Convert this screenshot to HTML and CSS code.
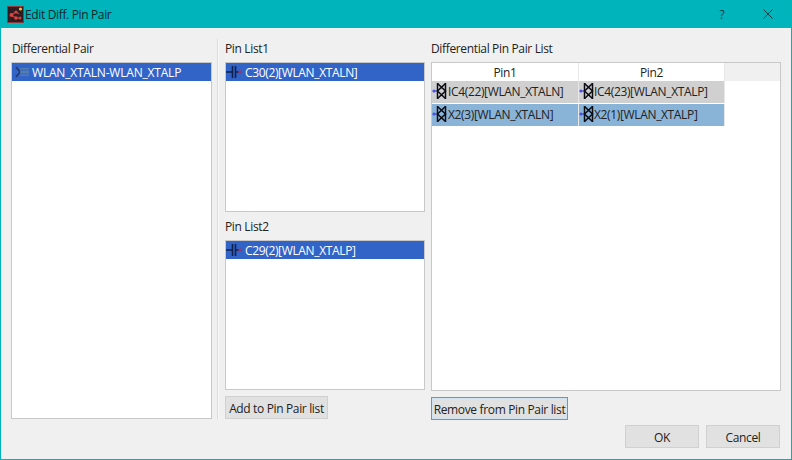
FILE: index.html
```html
<!DOCTYPE html>
<html lang="en">
<head>
<meta charset="utf-8">
<title>Edit Diff. Pin Pair</title>
<link rel="stylesheet" href="styles.css">
</head>
<body>
<div class="window">
  <header class="titlebar">
    <svg class="app-icon" width="17" height="17" viewBox="0 0 17 17">
      <rect x="0.5" y="0.5" width="16" height="16" fill="#2e1c22" stroke="#8a3a3a"/>
      <path d="M4 9 L9 6 L12 8 M4 9 L9 12 L13 12" stroke="#c8403a" stroke-width="1.2" fill="none"/>
      <circle cx="4.5" cy="9" r="2" fill="#d8483e"/>
      <circle cx="9" cy="6" r="1.6" fill="#d8483e"/>
      <circle cx="9" cy="12" r="1.8" fill="#d8483e"/>
      <circle cx="13" cy="12" r="1.5" fill="#c8403a"/>
      <circle cx="13.5" cy="3" r="1.6" fill="#f0c040"/>
    </svg>
    <span class="title">Edit Diff. Pin Pair</span>
    <span class="help">?</span>
    <svg class="close" width="10" height="10" viewBox="0 0 10 10"><path d="M0.5 0.5 L9.5 9.5 M9.5 0.5 L0.5 9.5" stroke="#1c3c40" stroke-width="1" fill="none"/></svg>
  </header>
  <main class="content">
    <div class="columns">
      <section class="col col-left">
        <h2 class="label label-left">Differential Pair</h2>
        <div class="list list-fill">
          <div class="list-row">
            <svg class="net-icon" width="16" height="14" viewBox="0 0 16 14">
              <path d="M2 2 L6 7 L2 12" stroke="#26366e" stroke-width="1.6" fill="none"/>
              <rect x="6" y="3" width="9" height="8" fill="#5f86a8" opacity="0.7"/>
              <path d="M6 5 H15 M6 9 H15" stroke="#3060c8" stroke-width="1"/>
            </svg>
            <span class="row-text">WLAN_XTALN-WLAN_XTALP</span>
          </div>
        </div>
      </section>
      <div class="divider"></div>
      <section class="col col-mid">
        <h2 class="label">Pin List1</h2>
        <div class="list list-half">
          <div class="list-row row-pin">
            <svg class="cap-icon" width="16" height="14" viewBox="0 0 16 14">
              <path d="M0 7 H6 M10 7 H13" stroke="#10204a" stroke-width="1.3"/>
              <path d="M6.5 1 V13 M9.5 1 V13" stroke="#10204a" stroke-width="1.6"/>
              <circle cx="14" cy="7" r="1.8" fill="#8a3a78"/>
            </svg>
            <span>C30(2)[WLAN_XTALN]</span>
          </div>
        </div>
        <h2 class="label label-second">Pin List2</h2>
        <div class="list list-half">
          <div class="list-row row-pin">
            <svg class="cap-icon" width="16" height="14" viewBox="0 0 16 14">
              <path d="M0 7 H6 M10 7 H13" stroke="#10204a" stroke-width="1.3"/>
              <path d="M6.5 1 V13 M9.5 1 V13" stroke="#10204a" stroke-width="1.6"/>
              <circle cx="14" cy="7" r="1.8" fill="#8a3a78"/>
            </svg>
            <span>C29(2)[WLAN_XTALP]</span>
          </div>
        </div>
        <button class="btn btn-add" type="button">Add to Pin Pair list</button>
      </section>
      <section class="col col-right">
        <h2 class="label">Differential Pin Pair List</h2>
        <div class="table">
          <div class="thead">
            <div class="th th-1">Pin1</div>
            <div class="th th-2">Pin2</div>
          </div>
          <div class="tr tr-gray">
            <div class="td td-1"><svg class="pin-icon" width="16" height="18" viewBox="0 0 16 18"><use href="#pin"/></svg><span>IC4(22)[WLAN_XTALN]</span></div>
            <div class="td td-2"><svg class="pin-icon" width="16" height="18" viewBox="0 0 16 18"><use href="#pin"/></svg><span>IC4(23)[WLAN_XTALP]</span></div>
          </div>
          <div class="tr tr-blue">
            <div class="td td-1"><svg class="pin-icon" width="16" height="18" viewBox="0 0 16 18"><use href="#pin"/></svg><span>X2(3)[WLAN_XTALN]</span></div>
            <div class="td td-2"><svg class="pin-icon" width="16" height="18" viewBox="0 0 16 18"><use href="#pin"/></svg><span>X2(1)[WLAN_XTALP]</span></div>
          </div>
        </div>
        <button class="btn btn-remove" type="button">Remove from Pin Pair list</button>
      </section>
    </div>
    <footer class="footer">
      <button class="btn btn-foot" type="button">OK</button>
      <button class="btn btn-foot" type="button">Cancel</button>
    </footer>
  </main>
</div>
<svg class="defs" width="0" height="0">
  <defs>
    <g id="pin">
      <path d="M2 9 H6" stroke="#3a4ad0" stroke-width="1"/>
      <circle cx="2" cy="9" r="1.6" fill="#4a50e0"/>
      <path d="M5.5 1.5 L13.5 9 L5.5 16.5 M13.5 1.5 L5.5 9 L13.5 16.5" stroke="#0c0c14" stroke-width="1.6" fill="none"/>
      <path d="M5.5 1 V17 M13.5 1 V17" stroke="#0c0c14" stroke-width="1.5" fill="none"/>
    </g>
  </defs>
</svg>
</body>
</html>
```
FILE: styles.css
```css
* { box-sizing: border-box; }
html, body { margin: 0; padding: 0; }
body {
  width: 792px;
  height: 460px;
  overflow: hidden;
  font-family: "Open Sans", "Noto Sans", sans-serif;
  font-size: 12px;
  letter-spacing: -0.35px;
  color: #222;
}
.window {
  width: 792px;
  height: 460px;
  display: flex;
  flex-direction: column;
  background: #f0f0f0;
  border: 1px solid #00b4bc;
  border-top: 0;
}
.titlebar {
  height: 28px;
  flex: none;
  display: flex;
  align-items: center;
  background: #00b4bc;
  padding-left: 7px;
  margin: 0 -1px;
}
.app-icon { flex: none; margin-right: 1px; }
.title { color: #10282c; flex: 1; }
.help { width: 12px; margin-right: 35px; text-align: center; color: #1c3c40; }
.close { margin-right: 19px; }
.content {
  flex: 1;
  display: flex;
  flex-direction: column;
  padding: 11px 10px 11px 10px;
  min-height: 0;
}
.columns { display: flex; height: 380px; flex: none; }
.col { display: flex; flex-direction: column; }
.col-left { width: 201px; }
.col-mid { width: 200px; }
.col-right { width: 350px; margin-left: 6px; }
.divider {
  width: 2px;
  margin: 0 6px 0 5px;
  background: #dcdcdc;
  border-right: 1px solid #f8f8f8;
}
.label {
  margin: 0;
  height: 23px;
  flex: none;
  padding-top: 1px;
  font-size: inherit;
  font-weight: 400;
  line-height: 18px;
}
.label-left { padding-left: 1px; }
.label-second { margin-top: 5px; }
.list {
  background: #fff;
  border: 1px solid #c8c8c8;
  overflow: hidden;
}
.list-fill { flex: 1; }
.list-half { height: 150px; flex: none; }
.list-row {
  height: 18px;
  display: flex;
  align-items: center;
  background: #3264c8;
  color: #fff;
  padding-left: 2px;
  white-space: nowrap;
}
.row-text { letter-spacing: -0.2px; }
.net-icon { margin-right: 2px; flex: none; }
.row-pin { padding-left: 0; }
.cap-icon { margin-right: 3px; flex: none; }
.btn {
  font: inherit;
  letter-spacing: inherit;
  color: #222;
  background: #e1e1e1;
  border: 1px solid #d0d0d0;
  padding: 1px 0 0;
  height: 23px;
  flex: none;
  white-space: nowrap;
}
.btn-add { width: 103px; margin-top: 6px; }
.btn-remove {
  width: 137px;
  margin-top: 6px;
  border: 1px solid #4aa0e0;
  box-shadow: inset 0 0 0 1px #cfe3f3;
}
.table {
  height: 329px;
  flex: none;
  background: #fff;
  border: 1px solid #c8c8c8;
  overflow: hidden;
}
.thead { display: flex; height: 18px; background: #f0f0f0; }
.th { background: #fff; text-align: center; line-height: 19px; border-right: 1px solid #e8e8e8; }
.th-1, .td-1 { width: 147px; }
.th-2, .td-2 { width: 146px; }
.tr { display: flex; width: 293px; height: 22px; }
.tr-gray { background: #d0d0d0; }
.tr-blue { background: #8ab3d8; margin-top: 1px; }
.td {
  display: flex;
  align-items: center;
  white-space: nowrap;
  border-right: 1px solid #e8e8e8;
  padding-bottom: 2px;
}
.pin-icon { flex: none; }
.td-2 .pin-icon { margin-right: -1px; }
.defs { position: absolute; }
.footer {
  display: flex;
  justify-content: flex-end;
  gap: 7px;
  padding-right: 1px;
  margin-top: 6px;
}
.btn-foot { width: 74px; }
```
